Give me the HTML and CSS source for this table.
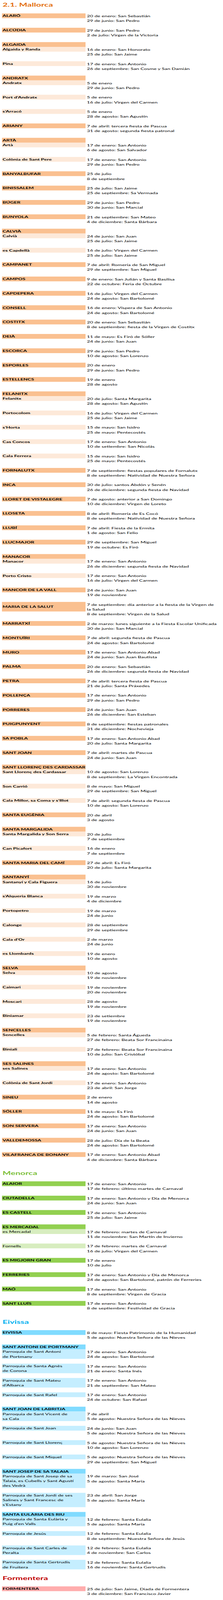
FILE: index.html
```html
<!DOCTYPE html>
<html lang="es">
<head>
<meta charset="utf-8">
<title>Fiestas locales – Illes Balears</title>
<link rel="stylesheet" href="styles.css">
</head>
<body>
<div class="page">

<h1 class="title title-first t-mallorca">2.1. Mallorca</h1>
<div class="list mallorca">
  <div class="entry"><div class="name">ALARÓ</div><div class="dates"><p>20 de enero: San Sebastián</p><p>29 de junio: San Pedro</p></div></div>
  <div class="entry"><div class="name">ALCÚDIA</div><div class="dates"><p>29 de junio: San Pedro</p><p>2 de julio: Virgen de la Victoria</p></div></div>
  <div class="head-row">ALGAIDA</div>
  <div class="entry sub"><div class="name">Algaida y Randa</div><div class="dates"><p>16 de enero: San Honorato</p><p>25 de julio: San Jaime</p></div></div>
  <div class="entry sub"><div class="name">Pina</div><div class="dates"><p>17 de enero: San Antonio</p><p>26 de septiembre: San Cosme y San Damián</p></div></div>
  <div class="head-row">ANDRATX</div>
  <div class="entry sub"><div class="name">Andratx</div><div class="dates"><p>5 de enero</p><p>29 de junio: San Pedro</p></div></div>
  <div class="entry sub"><div class="name">Port d’Andratx</div><div class="dates"><p>5 de enero</p><p>16 de julio: Virgen del Carmen</p></div></div>
  <div class="entry sub"><div class="name">s’Arracó</div><div class="dates"><p>5 de enero</p><p>28 de agosto: San Agustín</p></div></div>
  <div class="entry"><div class="name">ARIANY</div><div class="dates"><p>7 de abril: tercera fiesta de Pascua</p><p>31 de agosto: segunda fiesta patronal</p></div></div>
  <div class="head-row">ARTÀ</div>
  <div class="entry sub"><div class="name">Artà</div><div class="dates"><p>17 de enero: San Antonio</p><p>6 de agosto: San Salvador</p></div></div>
  <div class="entry sub"><div class="name">Colònia de Sant Pere</div><div class="dates"><p>17 de enero: San Antonio</p><p>29 de junio: San Pedro</p></div></div>
  <div class="entry"><div class="name">BANYALBUFAR</div><div class="dates"><p>25 de julio</p><p>8 de septiembre</p></div></div>
  <div class="entry"><div class="name">BINISSALEM</div><div class="dates"><p>25 de julio: San Jaime</p><p>25 de septiembre: Sa Vermada</p></div></div>
  <div class="entry"><div class="name">BÚGER</div><div class="dates"><p>29 de junio: San Pedro</p><p>30 de junio: San Marcial</p></div></div>
  <div class="entry"><div class="name">BUNYOLA</div><div class="dates"><p>21 de septiembre: San Mateo</p><p>4 de diciembre: Santa Bárbara</p></div></div>
  <div class="head-row">CALVIÀ</div>
  <div class="entry sub"><div class="name">Calvià</div><div class="dates"><p>24 de junio: San Juan</p><p>25 de julio: San Jaime</p></div></div>
  <div class="entry sub"><div class="name">es Capdellà</div><div class="dates"><p>16 de julio: Virgen del Carmen</p><p>25 de julio: San Jaime</p></div></div>
  <div class="entry"><div class="name">CAMPANET</div><div class="dates"><p>7 de abril: Romería de San Miguel</p><p>29 de septiembre: San Miguel</p></div></div>
  <div class="entry"><div class="name">CAMPOS</div><div class="dates"><p>9 de enero: San Julián y Santa Basilisa</p><p>22 de octubre: Feria de Octubre</p></div></div>
  <div class="entry"><div class="name">CAPDEPERA</div><div class="dates"><p>16 de julio: Virgen del Carmen</p><p>24 de agosto: San Bartolomé</p></div></div>
  <div class="entry"><div class="name">CONSELL</div><div class="dates"><p>16 de enero: Víspera de San Antonio</p><p>24 de agosto: San Bartolomé</p></div></div>
  <div class="entry"><div class="name">COSTITX</div><div class="dates"><p>20 de enero: San Sebastián</p><p>8 de septiembre: fiesta de la Virgen de Costitx</p></div></div>
  <div class="entry"><div class="name">DEIÀ</div><div class="dates"><p>11 de mayo: Es Firó de Sóller</p><p>24 de junio: San Juan</p></div></div>
  <div class="entry"><div class="name">ESCORCA</div><div class="dates"><p>29 de junio: San Pedro</p><p>10 de agosto: San Lorenzo</p></div></div>
  <div class="entry"><div class="name">ESPORLES</div><div class="dates"><p>20 de enero</p><p>29 de junio: San Pedro</p></div></div>
  <div class="entry"><div class="name">ESTELLENCS</div><div class="dates"><p>19 de enero</p><p>28 de agosto</p></div></div>
  <div class="head-row">FELANITX</div>
  <div class="entry sub"><div class="name">Felanitx</div><div class="dates"><p>20 de julio: Santa Margarita</p><p>28 de agosto: San Agustín</p></div></div>
  <div class="entry sub"><div class="name">Portocolom</div><div class="dates"><p>16 de julio: Virgen del Carmen</p><p>25 de julio: San Jaime</p></div></div>
  <div class="entry sub"><div class="name">s’Horta</div><div class="dates"><p>15 de mayo: San Isidro</p><p>25 de mayo: Pentecostés</p></div></div>
  <div class="entry sub"><div class="name">Cas Concos</div><div class="dates"><p>17 de enero: San Antonio</p><p>10 de setiembre: San Nicolás</p></div></div>
  <div class="entry sub"><div class="name">Cala Ferrera</div><div class="dates"><p>15 de mayo: San Isidro</p><p>25 de mayo: Pentecostés</p></div></div>
  <div class="entry"><div class="name">FORNALUTX</div><div class="dates"><p>7 de septiembre: fiestas populares de Fornalutx</p><p>8 de septiembre: Natividad de Nuestra Señora</p></div></div>
  <div class="entry"><div class="name">INCA</div><div class="dates"><p>30 de julio: santos Abdón y Senén</p><p>26 de diciembre: segunda fiesta de Navidad</p></div></div>
  <div class="entry"><div class="name">LLORET DE VISTALEGRE</div><div class="dates"><p>7 de agosto: anterior a San Domingo</p><p>10 de diciembre: Virgen de Loreto</p></div></div>
  <div class="entry"><div class="name">LLOSETA</div><div class="dates"><p>8 de abril: Romería de Es Cocó</p><p>8 de septiembre: Natividad de Nuestra Señora</p></div></div>
  <div class="entry"><div class="name">LLUBÍ</div><div class="dates"><p>7 de abril: Fiesta de la Ermita</p><p>1 de agosto: San Felio</p></div></div>
  <div class="entry"><div class="name">LLUCMAJOR</div><div class="dates"><p>29 de septiembre: San Miguel</p><p>19 de octubre: Es Firó</p></div></div>
  <div class="head-row">MANACOR</div>
  <div class="entry sub"><div class="name">Manacor</div><div class="dates"><p>17 de enero: San Antonio</p><p>26 de diciembre: segunda fiesta de Navidad</p></div></div>
  <div class="entry sub"><div class="name">Porto Cristo</div><div class="dates"><p>17 de enero: San Antonio</p><p>16 de julio: Virgen del Carmen</p></div></div>
  <div class="entry"><div class="name">MANCOR DE LA VALL</div><div class="dates"><p>24 de junio: San Juan</p><p>19 de noviembre</p></div></div>
  <div class="entry"><div class="name tall">MARIA DE LA SALUT</div><div class="dates"><p>7 de septiembre: día anterior a la fiesta de la Virgen de<br>la Salud</p><p>8 de septiembre: Virgen de la Salud</p></div></div>
  <div class="entry"><div class="name">MARRATXÍ</div><div class="dates"><p>2 de marzo: lunes siguiente a la Fiesta Escolar Unificada</p><p>30 de junio: San Marcial</p></div></div>
  <div class="entry"><div class="name">MONTUÏRI</div><div class="dates"><p>7 de abril: segunda fiesta de Pascua</p><p>24 de agosto: San Bartolomé</p></div></div>
  <div class="entry"><div class="name">MURO</div><div class="dates"><p>17 de enero: San Antonio Abad</p><p>24 de junio: San Juan Bautista</p></div></div>
  <div class="entry"><div class="name">PALMA</div><div class="dates"><p>20 de enero: San Sebastián</p><p>26 de diciembre: segunda fiesta de Navidad</p></div></div>
  <div class="entry"><div class="name">PETRA</div><div class="dates"><p>7 de abril: tercera fiesta de Pascua</p><p>21 de julio: Santa Práxedes</p></div></div>
  <div class="entry"><div class="name">POLLENÇA</div><div class="dates"><p>17 de enero: San Antonio</p><p>29 de junio: San Pedro</p></div></div>
  <div class="entry"><div class="name">PORRERES</div><div class="dates"><p>24 de junio: San Juan</p><p>26 de diciembre: San Esteban</p></div></div>
  <div class="entry"><div class="name">PUIGPUNYENT</div><div class="dates"><p>8 de septiembre: fiestas patronales</p><p>31 de diciembre: Nochevieja</p></div></div>
  <div class="entry"><div class="name">SA POBLA</div><div class="dates"><p>17 de enero: San Antonio Abad</p><p>20 de julio: Santa Margarita</p></div></div>
  <div class="entry"><div class="name">SANT JOAN</div><div class="dates"><p>7 de abril: martes de Pascua</p><p>24 de junio: San Juan</p></div></div>
  <div class="head-row">SANT LLORENÇ DES CARDASSAR</div>
  <div class="entry sub"><div class="name">Sant Llorenç des Cardassar</div><div class="dates"><p>10 de agosto: San Lorenzo</p><p>8 de septiembre: La Virgen Encontrada</p></div></div>
  <div class="entry sub"><div class="name">Son Carrió</div><div class="dates"><p>8 de mayo: San Miguel</p><p>29 de septiembre: San Miguel</p></div></div>
  <div class="entry sub"><div class="name">Cala Millor, sa Coma y s’Illot</div><div class="dates"><p>7 de abril: segunda fiesta de Pascua</p><p>10 de agosto: San Lorenzo</p></div></div>
  <div class="entry"><div class="name">SANTA EUGÈNIA</div><div class="dates"><p>20 de abril</p><p>3 de agosto</p></div></div>
  <div class="head-row">SANTA MARGALIDA</div>
  <div class="entry sub"><div class="name">Santa Margalida y Son Serra</div><div class="dates"><p>20 de julio</p><p>7 de septiembre</p></div></div>
  <div class="entry sub"><div class="name">Can Picafort</div><div class="dates"><p>16 de enero</p><p>7 de septiembre</p></div></div>
  <div class="entry"><div class="name">SANTA MARIA DEL CAMÍ</div><div class="dates"><p>27 de abril: Es Firó</p><p>20 de julio: Santa Margarita</p></div></div>
  <div class="head-row">SANTANYÍ</div>
  <div class="entry sub"><div class="name">Santanyí y Cala Figuera</div><div class="dates"><p>16 de julio</p><p>30 de noviembre</p></div></div>
  <div class="entry sub"><div class="name">s’Alqueria Blanca</div><div class="dates"><p>19 de marzo</p><p>4 de diciembre</p></div></div>
  <div class="entry sub"><div class="name">Portopetro</div><div class="dates"><p>19 de marzo</p><p>24 de junio</p></div></div>
  <div class="entry sub"><div class="name">Calonge</div><div class="dates"><p>28 de septiembre</p><p>29 de septiembre</p></div></div>
  <div class="entry sub"><div class="name">Cala d’Or</div><div class="dates"><p>2 de marzo</p><p>24 de junio</p></div></div>
  <div class="entry sub"><div class="name">es Llombards</div><div class="dates"><p>19 de enero</p><p>10 de agosto</p></div></div>
  <div class="head-row">SELVA</div>
  <div class="entry sub"><div class="name">Selva</div><div class="dates"><p>10 de agosto</p><p>19 de noviembre</p></div></div>
  <div class="entry sub"><div class="name">Caimari</div><div class="dates"><p>19 de noviembre</p><p>20 de noviembre</p></div></div>
  <div class="entry sub"><div class="name">Moscari</div><div class="dates"><p>28 de agosto</p><p>19 de noviembre</p></div></div>
  <div class="entry sub"><div class="name">Biniamar</div><div class="dates"><p>23 de setiembre</p><p>19 de noviembre</p></div></div>
  <div class="head-row">SENCELLES</div>
  <div class="entry sub"><div class="name">Sencelles</div><div class="dates"><p>5 de febrero: Santa Águeda</p><p>27 de febrero: Beata Sor Francinaina</p></div></div>
  <div class="entry sub"><div class="name">Biniali</div><div class="dates"><p>27 de febrero: Beata Sor Francinaina</p><p>10 de julio: San Cristóbal</p></div></div>
  <div class="head-row">SES SALINES</div>
  <div class="entry sub"><div class="name">ses Salines</div><div class="dates"><p>17 de enero: San Antonio</p><p>24 de agosto: San Bartolomé</p></div></div>
  <div class="entry sub"><div class="name">Colònia de Sant Jordi</div><div class="dates"><p>17 de enero: San Antonio</p><p>23 de abril: San Jorge</p></div></div>
  <div class="entry"><div class="name">SINEU</div><div class="dates"><p>2 de enero</p><p>14 de agosto</p></div></div>
  <div class="entry"><div class="name">SÓLLER</div><div class="dates"><p>11 de mayo: Es Firó</p><p>24 de agosto: San Bartolomé</p></div></div>
  <div class="entry"><div class="name">SON SERVERA</div><div class="dates"><p>17 de enero: San Antonio</p><p>24 de junio: San Juan</p></div></div>
  <div class="entry"><div class="name">VALLDEMOSSA</div><div class="dates"><p>28 de julio: Día de la Beata</p><p>24 de agosto: San Bartolomé</p></div></div>
  <div class="entry"><div class="name">VILAFRANCA DE BONANY</div><div class="dates"><p>17 de enero: San Antonio Abad</p><p>4 de diciembre: Santa Bárbara</p></div></div>
</div>

<h2 class="title t-menorca">Menorca</h2>
<div class="list menorca">
  <div class="entry"><div class="name">ALAIOR</div><div class="dates"><p>17 de enero: San Antonio</p><p>17 de febrero: último martes de Carnaval</p></div></div>
  <div class="entry"><div class="name">CIUTADELLA</div><div class="dates"><p>17 de enero: San Antonio y Día de Menorca</p><p>24 de junio: San Juan</p></div></div>
  <div class="entry"><div class="name">ES CASTELL</div><div class="dates"><p>17 de enero: San Antonio</p><p>25 de julio: San Jaime</p></div></div>
  <div class="head-row">ES MERCADAL</div>
  <div class="entry sub"><div class="name">es Mercadal</div><div class="dates"><p>17 de febrero: martes de Carnaval</p><p>11 de noviembre: San Martín de Invierno</p></div></div>
  <div class="entry sub"><div class="name">Fornells</div><div class="dates"><p>17 de febrero: martes de Carnaval</p><p>16 de julio: Virgen del Carmen</p></div></div>
  <div class="entry"><div class="name">ES MIGJORN GRAN</div><div class="dates"><p>17 de enero</p><p>10 de julio</p></div></div>
  <div class="entry"><div class="name">FERRERIES</div><div class="dates"><p>17 de enero: San Antonio y Día de Menorca</p><p>24 de agosto: San Bartolomé, patrón de Ferreries</p></div></div>
  <div class="entry"><div class="name">MAÓ</div><div class="dates"><p>17 de enero: San Antonio</p><p>8 de septiembre: Virgen de Gracia</p></div></div>
  <div class="entry"><div class="name">SANT LLUÍS</div><div class="dates"><p>17 de enero: San Antonio</p><p>8 de septiembre: Festividad de Gracia</p></div></div>
</div>

<h2 class="title t-eivissa">Eivissa</h2>
<div class="list eivissa">
  <div class="entry"><div class="name">EIVISSA</div><div class="dates"><p>8 de mayo: Fiesta Patrimonio de la Humanidad</p><p>5 de agosto: Nuestra Señora de las Nieves</p></div></div>
  <div class="head-row">SANT ANTONI DE PORTMANY</div>
  <div class="entry sub"><div class="name">Parroquia de Sant Antoni<br>de Portmany</div><div class="dates"><p>17 de enero: San Antonio</p><p>24 de agosto: San Bartolomé</p></div></div>
  <div class="entry sub"><div class="name">Parroquia de Santa Agnès<br>de Corona</div><div class="dates"><p>17 de enero: San Antonio</p><p>21 de enero: Santa Inés</p></div></div>
  <div class="entry sub"><div class="name">Parroquia de Sant Mateu<br>d’Albarca</div><div class="dates"><p>17 de enero: San Antonio</p><p>21 de septiembre: San Mateo</p></div></div>
  <div class="entry sub"><div class="name">Parroquia de Sant Rafel</div><div class="dates"><p>17 de enero: San Antonio</p><p>24 de octubre: San Rafael</p></div></div>
  <div class="head-row">SANT JOAN DE LABRITJA</div>
  <div class="entry sub"><div class="name">Parroquia de Sant Vicent de<br>sa Cala</div><div class="dates"><p>7 de abril</p><p>5 de agosto: Nuestra Señora de las Nieves</p></div></div>
  <div class="entry sub"><div class="name">Parroquia de Sant Joan</div><div class="dates"><p>24 de junio: San Juan</p><p>5 de agosto: Nuestra Señora de las Nieves</p></div></div>
  <div class="entry sub"><div class="name">Parroquia de Sant Llorenç</div><div class="dates"><p>5 de agosto: Nuestra Señora de las Nieves</p><p>10 de agosto: San Lorenzo</p></div></div>
  <div class="entry sub"><div class="name">Parroquia de Sant Miquel</div><div class="dates"><p>5 de agosto: Nuestra Señora de las Nieves</p><p>29 de septiembre: San Miguel</p></div></div>
  <div class="head-row">SANT JOSEP DE SA TALAIA</div>
  <div class="entry sub"><div class="name">Parroquia de Sant Josep de sa<br>Talaia, es Cubells y Sant Agustí<br>des Vedrà</div><div class="dates"><p>19 de marzo: San José</p><p>5 de agosto: Santa María</p></div></div>
  <div class="entry sub"><div class="name">Parroquia de Sant Jordi de ses<br>Salines y Sant Francesc de<br>s'Estany</div><div class="dates"><p>23 de abril: San Jorge</p><p>5 de agosto: Santa María</p></div></div>
  <div class="head-row">SANTA EULÀRIA DES RIU</div>
  <div class="entry sub"><div class="name">Parroquia de Santa Eulària y<br>Puig d'en Valls</div><div class="dates"><p>12 de febrero: Santa Eulalia</p><p>5 de agosto: Santa María</p></div></div>
  <div class="entry sub"><div class="name">Parroquia de Jesús</div><div class="dates"><p>12 de febrero: Santa Eulalia</p><p>8 de septiembre: Nuestra Señora de Jesús</p></div></div>
  <div class="entry sub"><div class="name">Parroquia de Sant Carles de<br>Peralta</div><div class="dates"><p>12 de febrero: Santa Eulalia</p><p>4 de noviembre: San Carlos</p></div></div>
  <div class="entry sub"><div class="name">Parroquia de Santa Gertrudis<br>de Fruitera</div><div class="dates"><p>12 de febrero: Santa Eulalia</p><p>16 de noviembre: Santa Gertrudis</p></div></div>
</div>

<h2 class="title title-tight t-formentera">Formentera</h2>
<div class="list formentera">
  <div class="entry last"><div class="name">FORMENTERA</div><div class="dates"><p>25 de julio: San Jaime, Diada de Formentera</p><p>3 de diciembre: San Francisco Javier</p></div></div>
</div>

</div>
</body>
</html>
```

FILE: styles.css
```css
html, body {
  margin: 0;
  padding: 0;
  background: #ffffff;
}

body {
  font-family: Lato, "Liberation Sans", sans-serif;
  font-size: 13.7px;
  line-height: 20px;
  color: #000000;
}

.page {
  display: flex;
  flex-direction: column;
  padding: 0 5px;
  transform-origin: 0 0;
}

@media (max-height: 4200px) {
  html {
    overflow: hidden;
  }
  body {
    height: 100vh;
    overflow: hidden;
  }
  .page {
    transform: scaleY(0.61244);
  }
}

.title {
  margin: 12px 0 20px;
  padding-left: 1.5px;
  height: 30px;
  font-size: 22.5px;
  line-height: 30px;
  font-weight: bold;
}

.title-first {
  margin-top: 5px;
  margin-bottom: 21px;
}

.title-tight {
  margin-top: 1px;
}

.t-mallorca { color: #e36c0a; }
.t-menorca { color: #7cbf3a; }
.t-eivissa { color: #00b0f0; }
.t-formentera { color: #c00000; }

.list {
  display: flex;
  flex-direction: column;
}

.mallorca { --head: #fac090; --sub: #fde9d9; }
.menorca { --head: #92d050; --sub: #d7edbf; }
.eivissa { --head: #80dbff; --sub: #c5eeff; }
.formentera { --head: #ffadad; --sub: #ffdede; }

.entry {
  display: grid;
  grid-template-columns: 214px 1fr;
  margin-bottom: 20px;
}

.entry.last {
  margin-bottom: 0;
}

.name {
  align-self: start;
  background: var(--head);
  font-weight: bold;
  padding-left: 1.5px;
  white-space: nowrap;
}

.name.tall {
  height: 40px;
  display: flex;
  align-items: center;
}

.entry.sub .name {
  background: var(--sub);
}

.menorca .entry.sub .name,
.eivissa .entry.sub .name {
  font-weight: normal;
}

.head-row {
  width: 214px;
  box-sizing: border-box;
  background: var(--head);
  font-weight: bold;
  padding-left: 1.5px;
  white-space: nowrap;
}

.dates {
  padding-left: 3.5px;
  white-space: nowrap;
}

.dates p {
  margin: 0;
  padding-top: 1px;
  margin-bottom: -1px;
}
```
